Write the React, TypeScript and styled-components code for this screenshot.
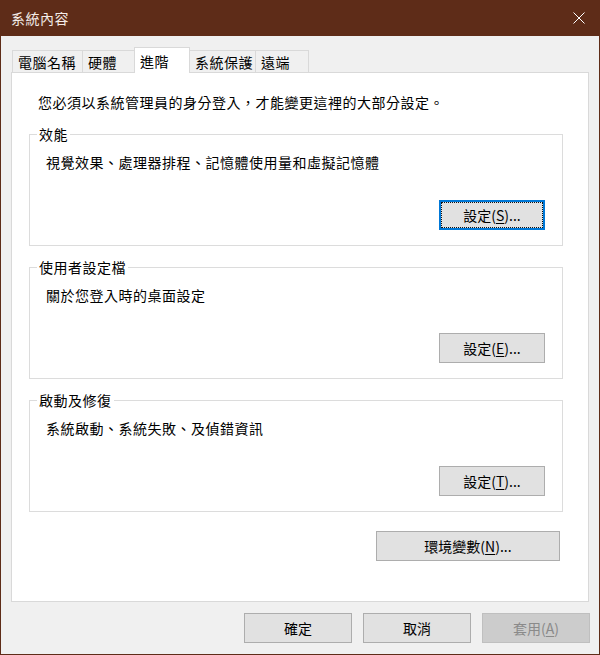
import styled, { createGlobalStyle } from 'styled-components'

const GlobalStyle = createGlobalStyle`
  html, body {
    margin: 0;
    padding: 0;
    background: #f0f0f0;
  }
  * {
    box-sizing: border-box;
  }
  body {
    font-family: 'Noto Sans CJK TC', 'Noto Sans', sans-serif;
    font-size: 14px;
    letter-spacing: 0.5px;
    color: #000;
  }
`

const brown = '#5e2c18'

const tabs = [
  { label: '電腦名稱', width: 71 },
  { label: '硬體', width: 53 },
  { label: '進階', width: 56, active: true },
  { label: '系統保護', width: 67 },
  { label: '遠端', width: 54 },
]

const groups = [
  { title: '效能', text: '視覺效果、處理器排程、記憶體使用量和虛擬記憶體', key: 'S', focused: true },
  { title: '使用者設定檔', text: '關於您登入時的桌面設定', key: 'E' },
  { title: '啟動及修復', text: '系統啟動、系統失敗、及偵錯資訊', key: 'T' },
]

function App() {
  return (
    <>
      <GlobalStyle />
      <Window>
        <TitleBar>
          <Title>系統內容</Title>
          <CloseButton>
            <svg width="12" height="12" viewBox="0 0 12 12">
              <path d="M0.5 0.5 L11.5 11.5 M11.5 0.5 L0.5 11.5" stroke="#ffffff" strokeWidth="1" fill="none" />
            </svg>
          </CloseButton>
        </TitleBar>

        <Content>
          <TabStrip>
            {tabs.map((t) => (
              <Tab key={t.label} $active={!!t.active} style={{ width: t.width }}>
                {t.label}
              </Tab>
            ))}
          </TabStrip>

          <Panel>
            <Notice>您必須以系統管理員的身分登入，才能變更這裡的大部分設定。</Notice>

            {groups.map((g) => (
              <Group key={g.title}>
                <Legend>{g.title}</Legend>
                <GroupText>{g.text}</GroupText>
                <GroupActions>
                  <Button $focused={!!g.focused}>
                    設定(<u>{g.key}</u>)...
                  </Button>
                </GroupActions>
              </Group>
            ))}

            <EnvRow>
              <Button $wide>
                環境變數(<u>N</u>)...
              </Button>
            </EnvRow>
          </Panel>
        </Content>

        <Footer>
          <Button>確定</Button>
          <Button>取消</Button>
          <Button disabled>
            套用(<u>A</u>)
          </Button>
        </Footer>
      </Window>
    </>
  )
}

export default App

const Window = styled.div`
  width: 600px;
  height: 655px;
  display: flex;
  flex-direction: column;
  background: #f0f0f0;
  border: 1px solid ${brown};
  border-top: none;
`

const TitleBar = styled.div`
  display: flex;
  align-items: center;
  justify-content: space-between;
  height: 36px;
  margin: 0 -1px;
  padding-left: 11px;
  background: ${brown};
`

const Title = styled.div`
  color: #f4ece8;
  font-size: 14px;
  line-height: 20px;
`

const CloseButton = styled.div`
  display: flex;
  align-items: center;
  justify-content: center;
  width: 42px;
  height: 36px;
`

const Content = styled.div`
  padding: 11px 10px 0;
`

const TabStrip = styled.div`
  display: flex;
  align-items: flex-end;
  height: 25px;
  padding-left: 1px;
`

const Tab = styled.div<{ $active: boolean }>`
  position: relative;
  display: flex;
  align-items: center;
  height: ${(p) => (p.$active ? '26px' : '22px')};
  margin-bottom: ${(p) => (p.$active ? '-1px' : '0')};
  padding-left: 5px;
  border: 1px solid #d9d9d9;
  border-bottom: none;
  background: ${(p) => (p.$active ? '#ffffff' : '#f0f0f0')};
  z-index: ${(p) => (p.$active ? 1 : 0)};
  font-size: 14px;
  line-height: 18px;
  white-space: nowrap;

  & + & {
    margin-left: -1px;
  }
`

const Panel = styled.div`
  height: 530px;
  padding: 19px 25px 0 17px;
  background: #ffffff;
  border: 1px solid #d9d9d9;
`

const Notice = styled.div`
  margin-left: 9px;
  line-height: 20px;
`

const Group = styled.fieldset`
  margin: 12px 0 0;
  padding: 9px 17px 15px 7px;
  border: 1px solid #dcdcdc;
  min-inline-size: 0;

  &:first-of-type {
    margin-top: 13px;
  }
`

const Legend = styled.legend`
  padding: 0 2px;
  font-size: 14px;
  line-height: 18px;
`

const GroupText = styled.div`
  padding-left: 9px;
  line-height: 20px;
`

const GroupActions = styled.div`
  display: flex;
  justify-content: flex-end;
  margin-top: 28px;
`

const EnvRow = styled.div`
  display: flex;
  justify-content: flex-end;
  margin: 19px 3px 0 0;
`

const Button = styled.button<{ $focused?: boolean; $wide?: boolean }>`
  width: ${(p) => (p.$wide ? '184px' : '106px')};
  height: 30px;
  padding: 0;
  font-family: 'Noto Sans CJK TC', 'Noto Sans', sans-serif;
  font-size: 14px;
  letter-spacing: 0;
  line-height: 18px;
  color: #000;
  background: #e1e1e1;
  border: 1px solid ${(p) => (p.$focused ? '#0078d7' : '#adadad')};
  box-shadow: ${(p) => (p.$focused ? 'inset 0 0 0 1px #0078d7' : 'none')};
  outline: ${(p) => (p.$focused ? '1px dotted #111' : 'none')};
  outline-offset: -3px;

  u {
    text-underline-offset: 2px;
  }

  &:disabled {
    width: 108px;
    color: #8a8a8a;
    background: #cccccc;
    border-color: #bfbfbf;
  }
`

const Footer = styled.div`
  display: flex;
  justify-content: flex-end;
  gap: 11px;
  padding: 11px 9px 0 0;

  ${Button} {
    width: 108px;
  }
`
